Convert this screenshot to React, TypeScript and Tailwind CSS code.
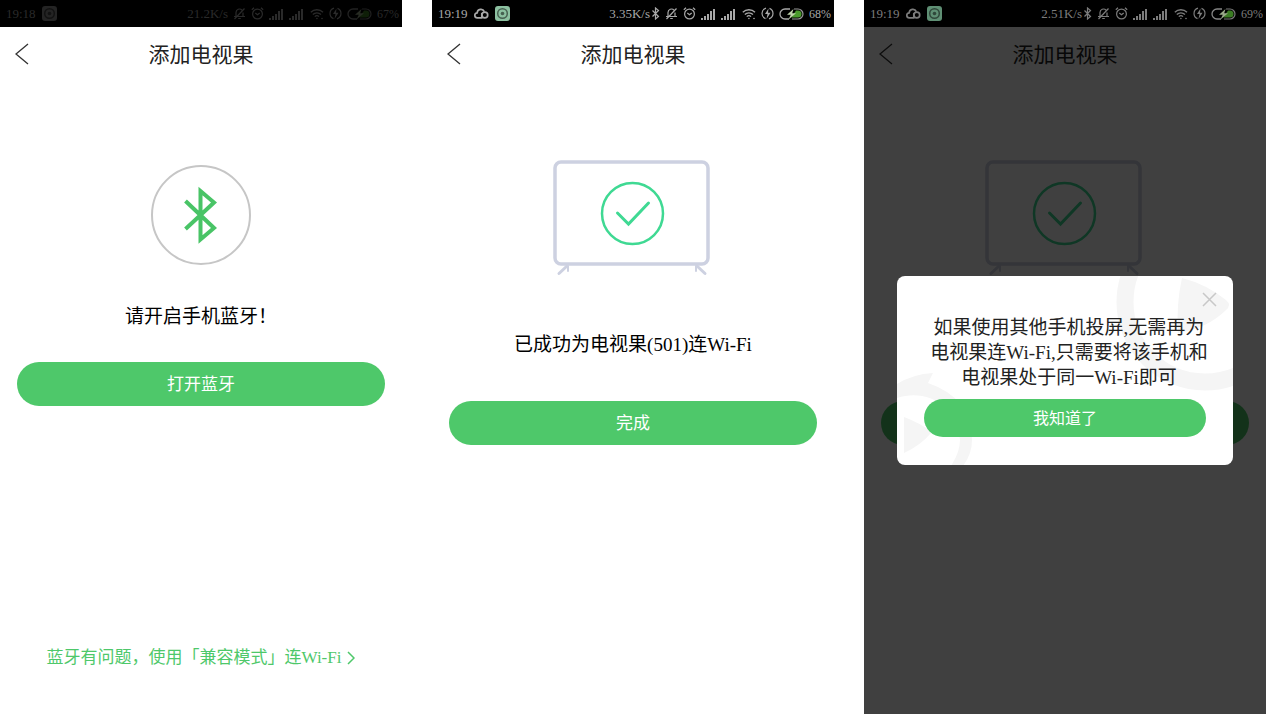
import type { ReactNode } from 'react'

type StatusBarProps = {
  time: string
  speed: string
  battery: string
  tone: string
  bluetooth?: boolean
  cloud?: boolean
  accent: string
  charge: string
}

function SignalIcon() {
  return (
    <svg width="15" height="12" viewBox="0 0 15 12" fill="currentColor" aria-hidden="true">
      <rect x="0" y="10" width="2" height="2" />
      <rect x="3" y="8" width="2" height="4" />
      <rect x="6" y="6" width="2" height="6" />
      <rect x="9" y="3" width="2" height="9" />
      <rect x="12" y="1" width="2" height="11" />
    </svg>
  )
}

function StatusBar({ time, speed, battery, tone, bluetooth = true, cloud = true, accent, charge }: StatusBarProps) {
  return (
    <div className={`flex h-[27px] items-center justify-between bg-black pl-[6px] pr-[3px] text-[13px] leading-4 ${tone}`}>
      <div className="flex items-center gap-[6px]">
        <span>{time}</span>
        {cloud ? (
          <svg width="15" height="12" viewBox="0 0 15 12" fill="none" stroke="currentColor" strokeWidth="1.7" aria-hidden="true">
            <path d="M8.6 9.8H3.4a2.5 2.5 0 0 1-.2-5A3.7 3.7 0 0 1 10.3 3.6" />
            <circle cx="10.8" cy="7" r="2.9" />
            <path d="M7.8 5v5" />
          </svg>
        ) : null}
        <svg width="15" height="15" viewBox="0 0 15 15" className={accent} aria-hidden="true">
          <rect width="15" height="15" rx="3" fill="currentColor" />
          <circle cx="7.5" cy="7.5" r="4.8" fill="none" stroke="#000" strokeOpacity=".5" strokeWidth="1.5" />
          <circle cx="7.5" cy="7.5" r="1.8" fill="#000" fillOpacity=".5" />
        </svg>
      </div>
      <div className="flex items-center">
        <span>{speed}</span>
        {bluetooth ? (
          <svg width="9" height="13" viewBox="0 0 9 13" fill="none" stroke="currentColor" strokeWidth="1.2" className="ml-px" aria-hidden="true">
            <path d="M1.5 3.5l6 6-3 2.500V1l3 2.500-6 6" />
          </svg>
        ) : null}
        <svg width="13" height="13" viewBox="0 0 13 13" fill="none" stroke="currentColor" strokeWidth="1.2" className="ml-[5px]" aria-hidden="true">
          <path d="M3 9.500V5.500a3.500 3.500 0 0 1 6-2.400M10 5.500v4M1 9.500h11M5.200 11.500h2.600M1.500 12L11.500 1.500" />
        </svg>
        <svg width="13" height="13" viewBox="0 0 13 13" fill="none" stroke="currentColor" strokeWidth="1.2" className="ml-[5px]" aria-hidden="true">
          <circle cx="6.5" cy="7" r="4.9" />
          <path d="M4.300 6l2.200 1.800L8.700 6M.8 2.800L3 .8M12.200 2.800L10 .8" />
        </svg>
        <span className="ml-[5px] flex gap-[5px]">
          <SignalIcon />
          <SignalIcon />
        </span>
        <svg width="14" height="12" viewBox="0 0 14 12" fill="none" stroke="currentColor" strokeWidth="1.3" className="ml-[6px]" aria-hidden="true">
          <path d="M.8 4.300a8.600 8.600 0 0 1 12.200 0M2.800 6.500a5.800 5.800 0 0 1 8.200 0M4.800 8.600a3 3 0 0 1 4.200 0" />
          <circle cx="6.9" cy="10.5" r=".8" fill="currentColor" stroke="none" />
          <circle cx="12" cy="10.5" r=".8" fill="currentColor" stroke="none" />
        </svg>
        <svg width="13" height="13" viewBox="0 0 13 13" fill="none" stroke="currentColor" strokeWidth="1.2" className="ml-[5px]" aria-hidden="true">
          <path d="M5 1.200a5.500 5.500 0 0 0-.5 10.400M8 11.800a5.500 5.500 0 0 0 .5-10.400" />
          <path d="M7.500 1.500L4 7h2.500l-1 5L9.500 5.800H7z" fill="currentColor" stroke="none" />
        </svg>
        <svg width="25" height="12" viewBox="0 0 25 12" fill="none" className={`ml-[5px] ${charge}`} aria-hidden="true">
          <path d="M11 1H6a5 5 0 0 0 0 10h4" stroke="#a8a8a8" strokeWidth="1.3" />
          <path d="M15 1h4a5 5 0 0 1 0 10h-6" stroke="#9a9a9a" strokeWidth="1.2" />
          <path d="M17 2.500h2a3.500 3.500 0 0 1 0 7h-6.500z" fill="currentColor" />
          <path d="M14.500 1L8 6.800h3.800L9.500 11.500l7.500-6.300h-3.800z" fill="#c0d4ac" />
        </svg>
        <span className="ml-[5px] text-[12px]">{battery}</span>
      </div>
    </div>
  )
}

function TitleBar() {
  return (
    <header className="grid h-[54px] grid-cols-[44px_1fr_44px] items-center">
      <button type="button" aria-label="返回" className="flex h-full items-center pl-[15px] text-[#333]">
        <svg width="14" height="22" viewBox="0 0 14 22" fill="none" stroke="currentColor" strokeWidth="1.3" aria-hidden="true">
          <path d="M13 1L1 11l12 10" />
        </svg>
      </button>
      <h1 className="pt-px text-center text-[21px] leading-7 text-[#222]">添加电视果</h1>
    </header>
  )
}

function PillButton({ children }: { children: ReactNode }) {
  return (
    <button type="button" className="h-[44px] w-full rounded-full bg-[#4ec86a] pt-px text-[17px] text-white">
      {children}
    </button>
  )
}

// covered: the dialog sits over the message and the button label
function SuccessScreen({ covered = false }: { covered?: boolean }) {
  return (
    <div inert={covered}>
      <TitleBar />
      <main className="flex flex-col items-center px-[17px] pt-[77px]">
        <svg width="160" height="118" viewBox="1 0 160 118" fill="none" aria-hidden="true">
          <g stroke="#cdd1e1" strokeLinecap="round">
            <rect x="3" y="4" width="153" height="102" rx="6" strokeWidth="3.5" />
            <path d="M15 108l-8 7.500M145 108l8 7.500" strokeWidth="3" />
            <path d="M16 108v5M144 108v5" strokeWidth="2" />
          </g>
          <circle cx="80.5" cy="55.5" r="30.5" stroke="#3fd993" strokeWidth="2.5" />
          <path d="M65.500 55l11 11L96.500 45" stroke="#3fd993" strokeWidth="3" strokeLinecap="round" />
        </svg>
        <p className={`mt-[55px] text-[19px] leading-7 text-black ${covered ? 'invisible' : ''}`}>
          已成功为电视果(501)连Wi-Fi
        </p>
        <div className="mt-[42px] w-full">
          <PillButton>{covered ? null : '完成'}</PillButton>
        </div>
      </main>
    </div>
  )
}

function TipDialog() {
  return (
    <div className="absolute inset-0 flex flex-col bg-black/75 px-[33px] pt-[249px]">
      <div
        role="dialog"
        aria-label="投屏提示"
        className="relative overflow-hidden rounded-lg bg-white px-[27px] pb-[28px] pt-[39px] text-center"
      >
        <svg width="336" height="190" viewBox="0 0 336 190" className="absolute right-0 top-0" aria-hidden="true">
          <circle cx="308" cy="26" r="80" fill="none" stroke="#f5f5f5" strokeWidth="17" />
          <path d="M285 2q24 6 44 22 6 5 0 10-18 18-48 23-2-28 4-55z" fill="#f5f5f5" />
          <path
            d="M0 108Q16 98 36 97L31 107Q75 122 75 164Q75 178 66 190H54Q63 176 63 164C60 130 30 112 0 122Z"
            fill="#f5f5f5"
          />
          <path d="M7 141q16 6 28 15-12 14-28 21z" fill="#f5f5f5" />
        </svg>
        <button type="button" aria-label="关闭" className="absolute right-[16px] top-[16px] text-[#c8c8c8]">
          <svg width="15" height="15" viewBox="0 0 15 15" fill="none" stroke="currentColor" strokeWidth="1.5" aria-hidden="true">
            <path d="M1 1l13 13M14 1L1 14" />
          </svg>
        </button>
        <p className="relative -ml-3 -mr-5 text-[19px] leading-[25px] text-[#222]">
          如果使用其他手机投屏,无需再为
          <br />
          电视果连Wi-Fi,只需要将该手机和
          <br />
          电视果处于同一Wi-Fi即可
        </p>
        <button type="button" className="relative mt-[9px] h-[38px] w-full rounded-full bg-[#4ec86a] pt-px text-base text-white">
          我知道了
        </button>
      </div>
    </div>
  )
}

function Phone({ children }: { children: ReactNode }) {
  return <section className="flex min-h-screen min-w-0 flex-1 flex-col bg-white">{children}</section>
}

export default function App() {
  return (
    <div lang="zh-CN" className="flex gap-[30px] bg-white font-['Liberation_Serif','Noto_Sans_CJK_SC',serif]">
      <Phone>
        <StatusBar
          time="19:18"
          speed="21.2K/s"
          battery="67%"
          bluetooth={false}
          cloud={false}
          tone="text-[#2a2a2a]"
          accent="text-[#242424]"
          charge="text-[#4a9a2c] opacity-20"
        />
        <TitleBar />
        <main className="flex flex-1 flex-col items-center px-[17px] pt-[84px]">
          <svg width="100" height="100" viewBox="0 0 100 100" fill="none" aria-hidden="true">
            <circle cx="50" cy="50" r="49" stroke="#c6c6c6" strokeWidth="2" />
            <path d="M34.500 36l28.500 27-13.500 11.500V26L63 37.500 34.500 64" stroke="#49c466" strokeWidth="4" />
          </svg>
          <p className="mt-[38px] text-[19px] leading-7 text-black">请开启手机蓝牙！</p>
          <div className="mt-[31px] w-full">
            <PillButton>打开蓝牙</PillButton>
          </div>
          <a href="#compat" className="mb-[42px] mt-auto flex items-center gap-[6px] text-[17px] leading-7 text-[#4ec86a]">
            蓝牙有问题，使用「兼容模式」连Wi-Fi
            <svg width="8" height="14" viewBox="0 0 8 14" fill="none" stroke="currentColor" strokeWidth="1.5" aria-hidden="true">
              <path d="M1 1l6 6-6 6" />
            </svg>
          </a>
        </main>
      </Phone>

      <Phone>
        <StatusBar
          time="19:19"
          speed="3.35K/s"
          battery="68%"
          tone="text-[#a8a8a8]"
          accent="text-[#8cc0a0]"
          charge="text-[#4a9a2c]"
        />
        <SuccessScreen />
      </Phone>

      <Phone>
        <StatusBar
          time="19:19"
          speed="2.51K/s"
          battery="69%"
          tone="text-[#7c7c7c]"
          accent="text-[#5f8f74]"
          charge="text-[#4a9a2c] opacity-80"
        />
        <div className="relative flex-1">
          <SuccessScreen covered />
          <TipDialog />
        </div>
      </Phone>
    </div>
  )
}
